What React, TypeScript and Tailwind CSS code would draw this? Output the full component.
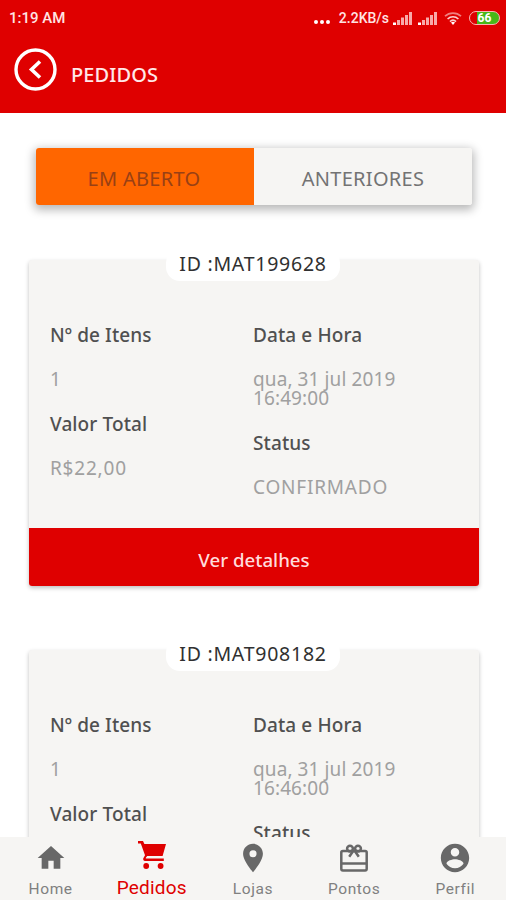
import type { ReactNode } from "react";
import { MdHome, MdLocationOn } from "react-icons/md";

interface Order {
    id: string;
    items: number;
    total: string;
    date: string;
    time: string;
    status: string;
}

const orders: Order[] = [
    { id: "MAT199628", items: 1, total: "R$22,00", date: "qua, 31 jul 2019", time: "16:49:00", status: "CONFIRMADO" },
    { id: "MAT908182", items: 1, total: "R$22,00", date: "qua, 31 jul 2019", time: "16:46:00", status: "CONFIRMADO" }
];

const SignalIcon = () => (
    <svg width="19" height="13" viewBox="0 0 19 13" fill="#f8aaaa">
        <rect x="0" y="10.5" width="3" height="2.5" fill="#fff" />
        <rect x="4" y="8" width="3" height="5" />
        <rect x="8" y="5.5" width="3" height="7.5" />
        <rect x="12" y="3" width="3" height="10" />
        <rect x="16" y="0" width="3" height="13" />
    </svg>
);

const WifiIcon = () => (
    <svg width="18" height="13" viewBox="0 0 18 13" fill="none" stroke="#fbd0d0" strokeWidth="1.7">
        <path d="M1 4.2C5.5 0 12.5 0 17 4.2" stroke="#f08080" />
        <path d="M3.6 7C6.7 4 11.3 4 14.4 7" />
        <path d="M6 9.6c1.8-1.7 4.2-1.7 6 0" />
        <path d="M7 10.6L9 13l2-2.4c-1.2-1-2.8-1-4 0z" fill="#fff" stroke="none" />
    </svg>
);

const CartIcon = () => (
    <svg width="30" height="30" viewBox="0 0 30 30" fill="currentColor">
        <path d="M1 1h5l1.4 3H29L25.6 16H10.2l-1.4 1.8v.8h18V21H8c-1.4 0-2-1.2-1.8-2.4l1.8-3.4L3.8 3.4H1z" />
        <circle cx="9.2" cy="26" r="2.9" />
        <circle cx="23.6" cy="26" r="2.9" />
    </svg>
);

const GiftIcon = () => (
    <svg width="30" height="28" viewBox="0 0 30 28" fill="none" stroke="currentColor" strokeWidth="2.5">
        <rect x="2.3" y="7" width="25.4" height="19.4" rx="1.6" />
        <path d="M2.3 19.5h25.4" />
        <circle cx="11" cy="4.6" r="2.9" />
        <circle cx="19" cy="4.6" r="2.9" />
        <path d="M14.6 6.5L10.2 12.8M15.4 6.5l4.4 6.3" />
    </svg>
);

const AccountIcon = () => (
    <svg width="34" height="34" viewBox="0 0 24 24" fill="currentColor">
        <path d="M12 2C6.48 2 2 6.48 2 12s4.48 10 10 10 10-4.48 10-10S17.52 2 12 2zm0 3c1.66 0 3 1.34 3 3s-1.34 3-3 3-3-1.34-3-3 1.34-3 3-3zm0 14.2c-2.5 0-4.71-1.28-6-3.22.03-1.99 4-3.08 6-3.08 1.99 0 5.97 1.09 6 3.08-1.29 1.94-3.5 3.22-6 3.22z" />
    </svg>
);

const StatusBar = () => (
    <div className="flex h-9 items-center justify-between pl-[9px] pr-[6px] font-['Roboto',sans-serif] text-[15px] font-medium text-[#ffe3e3]">
        <span>1:19 AM</span>
        <div className="flex items-center">
            <div className="mr-[9px] mt-[7px] flex gap-[2px]">
                <i className="size-1 rounded-full bg-white" />
                <i className="size-1 rounded-full bg-white" />
                <i className="size-1 rounded-full bg-white" />
            </div>
            <span className="mr-1 text-[14px]">2.2KB/s</span>
            <SignalIcon />
            <span className="w-[6px]" />
            <SignalIcon />
            <span className="w-[7px]" />
            <WifiIcon />
            <span className="ml-[7px] flex h-[14px] w-[31px] items-center justify-center rounded-full border-[1.5px] border-[#f9b4b4] bg-linear-to-r from-[#df0000] from-25% via-[#48b818] via-25% to-[#48b818] text-[12px] font-bold leading-none text-white">
                66
            </span>
        </div>
    </div>
);

const Header = () => (
    <header className="h-[113px] shrink-0 bg-[#df0000]">
        <StatusBar />
        <div className="flex items-center pl-[14px] pt-3">
            <svg width="43" height="43" viewBox="0 0 43 43" fill="none" stroke="#fff">
                <circle cx="21.5" cy="21.5" r="19.5" strokeWidth="3.4" />
                <path d="M26 13.5L17.5 21.5L26 29.5" strokeWidth="3.6" />
            </svg>
            <h1 className="ml-[14px] mt-[11px] text-[20px] font-medium leading-6 tracking-[0.1px] text-[#ffe8e8]">PEDIDOS</h1>
        </div>
    </header>
);

const Tabs = () => (
    <div className="ml-9 mt-[35px] flex h-[57px] w-[436px] shrink-0 overflow-hidden rounded-[3px] text-[20px] tracking-[0.3px] shadow-[0_3px_10px_2px_rgba(0,0,0,0.28)]">
        <button className="w-[218px] bg-[#ff6600] pr-[2px] pt-1 text-[#984015]">EM ABERTO</button>
        <button className="w-[218px] bg-[#f6f5f3] pt-1 text-[#737373]">ANTERIORES</button>
    </div>
);

interface FieldProps {
    label: string;
    wide?: boolean;
    children: ReactNode;
}

const Field = ({ label, wide = false, children }: FieldProps) => (
    <div className="mb-[26px] leading-[19px]">
        <dt className="mb-[25px] font-medium tracking-[0.1px] text-[#505050]">{label}</dt>
        <dd className={wide ? "tracking-[0.8px] text-[#a0a0a0]" : "tracking-[0.1px] text-[#a0a0a0]"}>{children}</dd>
    </div>
);

const OrderCard = ({ order }: { order: Order }) => (
    <section className="mb-16 ml-[29px] flex h-[326px] w-[450px] flex-col rounded-[3px] bg-[#f6f5f3] text-[19px] shadow-[0_2px_4px_0_rgba(0,0,0,0.25)]">
        <h2 className="-mt-[11px] ml-[137px] h-8 w-[174px] rounded-[14px] bg-white text-center text-[19.5px] leading-[30px] tracking-[0.75px] text-[#303030]">
            ID :{order.id}
        </h2>
        <div className="grid h-[247px] grid-cols-[203px_1fr] pl-[21px] pt-[45px]">
            <dl>
                <Field label="Nº de Itens">{order.items}</Field>
                <Field label="Valor Total" wide>
                    {order.total}
                </Field>
            </dl>
            <dl>
                <Field label="Data e Hora">
                    {order.date}
                    <br />
                    {order.time}
                </Field>
                <Field label="Status" wide>
                    {order.status}
                </Field>
            </dl>
        </div>
        <button className="h-[58px] w-full rounded-b-[3px] bg-[#df0000] pt-[6px] text-[18.7px] font-medium text-[#ffdcdc]">
            Ver detalhes
        </button>
    </section>
);

const NavItem = ({ label, active = false, children }: { label: string; active?: boolean; children: ReactNode }) => (
    <a className={`flex w-1/5 flex-col items-center font-['Roboto',sans-serif] ${active ? "text-[#df0000]" : "text-[#686868]"}`}>
        <span className={`flex items-center justify-center ${active ? "h-[36px]" : "h-[41px]"}`}>{children}</span>
        <span
            className={
                active
                    ? "mt-[3px] text-[19px] leading-6 tracking-[0.2px]"
                    : "mt-px text-[15.5px] leading-5 tracking-[0.6px] text-[#808080]"
            }
        >
            {label}
        </span>
    </a>
);

const BottomNav = () => (
    <nav className="flex h-[63px] shrink-0 bg-[#f6f5f3]">
        <NavItem label="Home">
            <MdHome size={32} />
        </NavItem>
        <NavItem label="Pedidos" active>
            <CartIcon />
        </NavItem>
        <NavItem label="Lojas">
            <MdLocationOn size={34} />
        </NavItem>
        <NavItem label="Pontos">
            <GiftIcon />
        </NavItem>
        <NavItem label="Perfil">
            <AccountIcon />
        </NavItem>
    </nav>
);

const App = () => {
    return (
        <div className="flex h-[900px] w-[506px] flex-col overflow-hidden bg-white font-['Noto_Sans',sans-serif]">
            <Header />
            <main className="flex min-h-0 flex-1 flex-col overflow-hidden">
                <Tabs />
                <div className="pt-[55px]">
                    {orders.map((order) => (
                        <OrderCard key={order.id} order={order} />
                    ))}
                </div>
            </main>
            <BottomNav />
        </div>
    );
};

export default App;
